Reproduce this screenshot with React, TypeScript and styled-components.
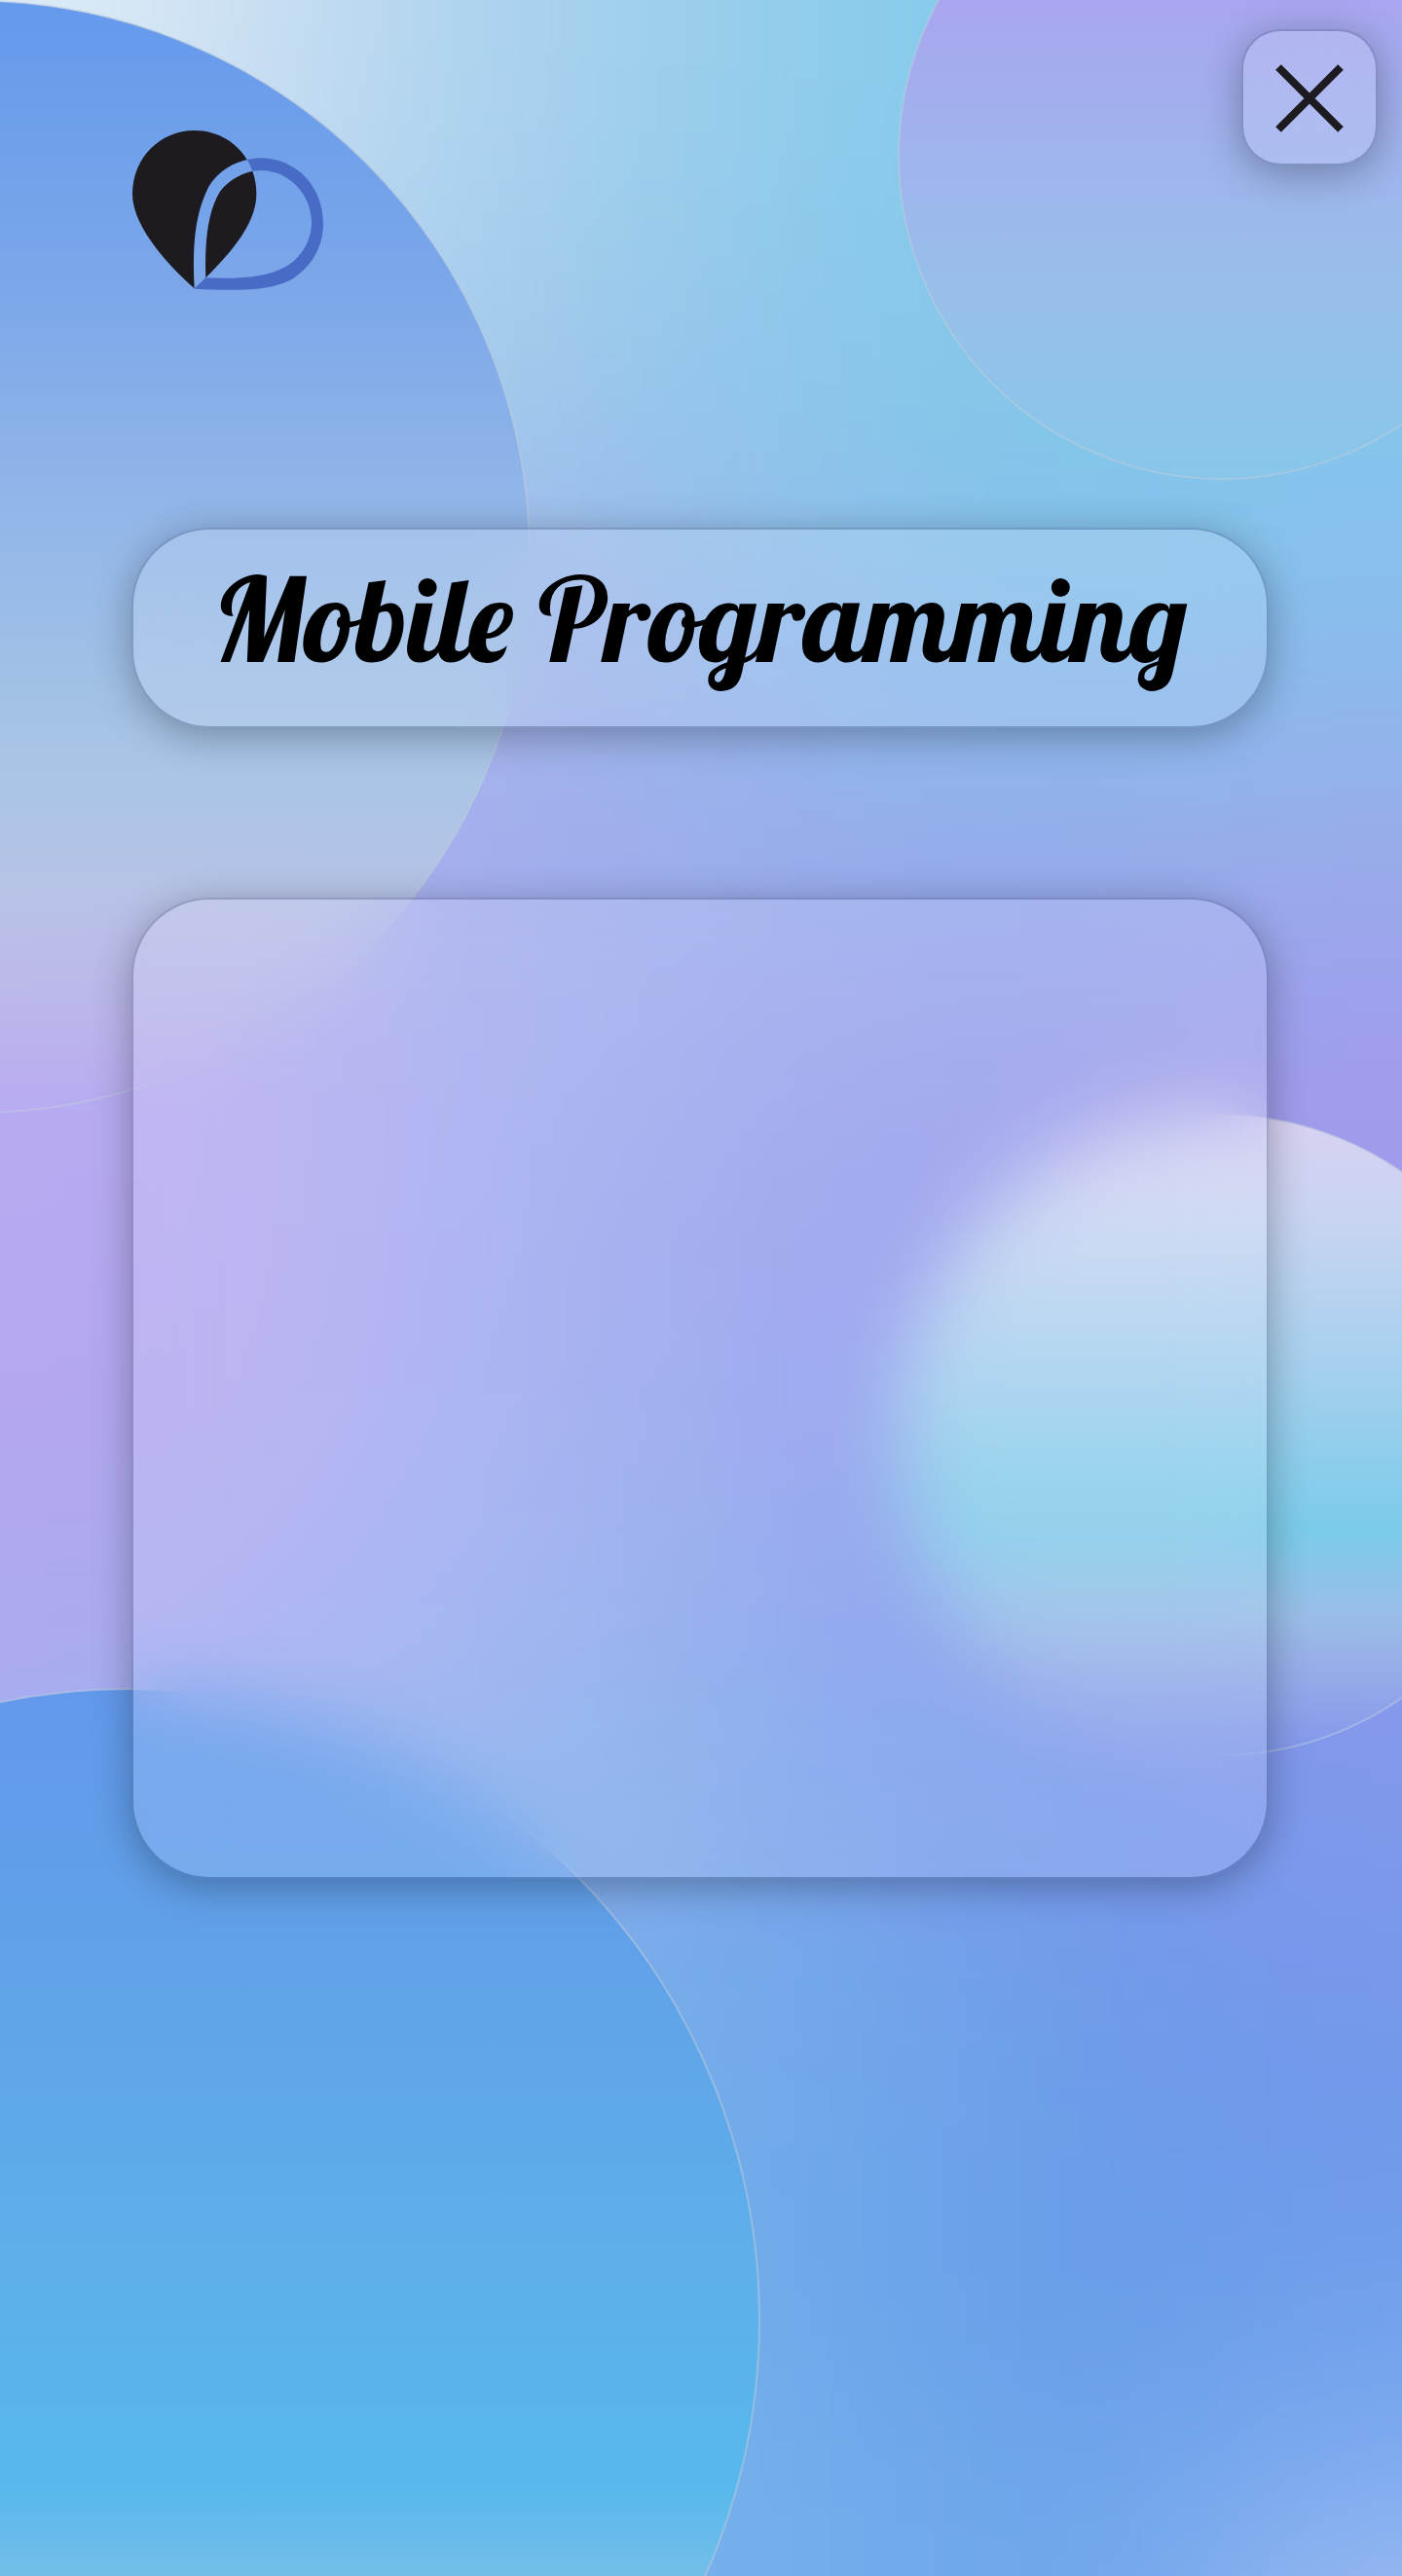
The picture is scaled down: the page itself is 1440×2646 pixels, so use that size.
import React from "react";
import styled, { createGlobalStyle } from "styled-components";

const GlobalStyle = createGlobalStyle`
  *, *::before, *::after { box-sizing: border-box; }
  body { margin: 0; background: #8fb4ec; }
`;

const Page = styled.div`
  position: relative;
  isolation: isolate;
  min-height: 100vh;
  overflow: hidden;
  font-family: "Lobster", "Liberation Serif", serif;
  color: #000;
`;

const Wallpaper = styled.svg`
  position: absolute;
  inset: 0;
  z-index: -1;
  width: 100%;
  height: 100%;
`;

const Header = styled.header`
  display: flex;
  justify-content: space-between;
  align-items: flex-start;
  height: 542px;
  padding: 30px 25px 0 136px;
`;

const LogoLink = styled.a`
  display: block;
  margin-top: 104px;
  line-height: 0;
`;

const Glass = styled.div<{ $blur?: number }>`
  border: 2px solid rgba(40, 50, 80, 0.25);
  background: rgba(255, 255, 255, 0.14);
  background-clip: padding-box;
  backdrop-filter: blur(${({ $blur = 32 }) => $blur}px);
  box-shadow: 0 8px 40px rgba(0, 0, 0, 0.3);
`;

const CloseButton = styled(Glass)`
  display: grid;
  place-items: center;
  width: 140px;
  height: 140px;
  padding: 2px 0 0;
  border-radius: 40px;
  cursor: pointer;
`;

const Main = styled.main`
  display: flex;
  flex-direction: column;
  gap: 174px;
  padding: 0 137px 80px 135px;
`;

const TitleCard = styled(Glass)`
  display: flex;
  align-items: center;
  justify-content: center;
  height: 206px;
  padding-bottom: 20px;
  border-radius: 80px;
`;

const Title = styled.h1`
  margin: 0;
  font-size: 120px;
  font-weight: 400;
  line-height: 150px;
  white-space: nowrap;
`;

const ContentCard = styled(Glass)`
  min-height: 1008px;
  border-radius: 80px;
`;

const CELL_W = 180;
const CELL_H = 189;

const MESH: string[][] = [
  ["#dceaf6", "#c8def2", "#b2d4ee", "#a1d0ed", "#92cceb", "#84cbea", "#84cbea", "#84cbea"],
  ["#cfe0f3", "#bad6ef", "#abd0ee", "#9bcaec", "#8fc8ea", "#82c8e9", "#82c8ea", "#82c8ea"],
  ["#bcd0ee", "#b0cbee", "#a6c6ec", "#98c2ea", "#8ec4ea", "#85c5e9", "#82c6ea", "#86c4ec"],
  ["#b4bcee", "#acb8ee", "#a5b4ec", "#9cb6ea", "#92bbec", "#89bbec", "#87bdec", "#89bcec"],
  ["#b6b0ee", "#adafee", "#a5afec", "#9fafec", "#97aeec", "#93afec", "#94b0eb", "#98adea"],
  ["#b9acf0", "#b1acf0", "#a6aeef", "#9fa9ed", "#9aa5ec", "#979fec", "#9a9feb", "#9f9fec"],
  ["#b8a9f2", "#b3a8f0", "#a2abf0", "#9aa5ed", "#959bed", "#9599ed", "#9c9aec", "#a29aec"],
  ["#b5a6f0", "#b2a8f0", "#a2abf0", "#96a5ed", "#8e9eee", "#8f98ed", "#9598ec", "#9898ec"],
  ["#aea9f0", "#a8abf0", "#9bacf0", "#90a8ee", "#859eec", "#8298ec", "#8698ec", "#8b98ec"],
  ["#a8adf0", "#9cacf0", "#8faeee", "#83aaec", "#7aa1ec", "#7899ec", "#7b97ec", "#8298ec"],
  ["#90b0ee", "#88b0ee", "#82b0ec", "#7cacea", "#76a8ea", "#739fea", "#7299ea", "#7a98ec"],
  ["#80b0ee", "#7cb0ee", "#78b0ec", "#74aeea", "#70a9ea", "#6ca3ea", "#6c9aea", "#6f99ea"],
  ["#80b4ee", "#7cb4ee", "#78b2ec", "#74b0ea", "#6fabea", "#699fe8", "#669bea", "#709fec"],
  ["#84b8ee", "#80b6ee", "#7cb4ec", "#78b2eb", "#74aeeb", "#6fa8ea", "#70a5eb", "#80adee"],
];

const MESH_ROWS = [MESH[0], ...MESH, MESH[MESH.length - 1].map((c, i) => (i === 7 ? "#a4bff2" : c))];

const ORBS = [
  {
    id: "orb-top-left", cx: -27, cy: 572, r: 571,
    stops: [["0", "#6499ec", 1], ["0.25", "#7ba7e9", 1], ["0.5", "#96b9e8", 1], ["0.7", "#aac6e5", 1], ["0.8", "#b7c5e5", 0.9], ["1", "#c8c2e4", 0]],
  },
  {
    id: "orb-top-right", cx: 1255, cy: 160, r: 332,
    stops: [["0", "#ada0f1", 1], ["0.26", "#a8a6f0", 1], ["0.5", "#9fb4ed", 1], ["0.75", "#96c1e9", 1], ["1", "#88c6ea", 1]],
  },
  {
    id: "orb-right", cx: 1252, cy: 1474, r: 329,
    stops: [["0", "#d9d1f2", 1], ["0.15", "#c9d4f1", 1], ["0.4", "#a5d0ee", 1], ["0.65", "#7bcbea", 1], ["0.78", "#9abee7", 1], ["1", "#a8b4e4", 0]],
  },
  {
    id: "orb-bottom-left", cx: 132, cy: 2383, r: 648,
    stops: [["0", "#6399ec", 1], ["0.2", "#60a1e9", 1], ["0.45", "#5eafea", 1], ["0.63", "#57b8ec", 1], ["0.72", "#7abfe8", 1], ["1", "#a0c8e8", 1]],
  },
] as const;

function Backdrop() {
  return (
    <Wallpaper viewBox="0 0 1440 2646" preserveAspectRatio="xMidYMin slice" aria-hidden="true">
      <defs>
        <filter id="mesh-blur" filterUnits="userSpaceOnUse" x="-400" y="-400" width="2240" height="3446" colorInterpolationFilters="sRGB">
          <feGaussianBlur stdDeviation="105" />
        </filter>
        {ORBS.map((orb) => (
          <linearGradient key={orb.id} id={orb.id} x1="0" y1="0" x2="0" y2="1">
            {orb.stops.map(([offset, color, opacity]) => (
              <stop key={offset} offset={offset} stopColor={color} stopOpacity={opacity} />
            ))}
          </linearGradient>
        ))}
      </defs>
      <g filter="url(#mesh-blur)">
        {MESH_ROWS.map((row, y) =>
          [row[0], ...row, row[7]].map((color, x) => (
            <rect
              key={`${x}-${y}`}
              x={(x - 1) * CELL_W - (x === 0 ? 400 : 0)}
              y={(y - 1) * CELL_H - (y === 0 ? 400 : 0)}
              width={CELL_W + (x === 0 || x === 9 ? 400 : 1)}
              height={CELL_H + (y === 0 || y === 15 ? 400 : 1)}
              fill={color}
            />
          )),
        )}
      </g>
      {ORBS.map((orb) => (
        <circle
          key={orb.id}
          cx={orb.cx}
          cy={orb.cy}
          r={orb.r}
          fill={`url(#${orb.id})`}
          stroke="#c0cede"
          strokeOpacity="0.5"
          strokeWidth="2"
        />
      ))}
    </Wallpaper>
  );
}

const DROP = "M239 529C150 450 48 335 48 238C48 125 135 42 239 42C345 42 430 125 430 238C430 330 350 425 239 529Z";
const RING =
  "M239 530C232 400 240 300 283 215C320 155 385 127 445 127C555 130 636 215 636 330C636 400 600 460 545 497C480 537 370 537 239 530Z" +
  "M274 496C270 390 280 290 318 230C350 188 400 165 445 165C530 165 600 240 600 325C600 375 575 425 530 456C470 495 380 500 274 496Z";

function Logo() {
  return (
    <svg width="196" height="164" viewBox="48 42 588 492" aria-hidden="true">
      <defs>
        <mask id="outside-ring" maskUnits="userSpaceOnUse" x="0" y="0" width="700" height="600">
          <rect width="700" height="600" fill="#fff" />
          <path d={RING} fill="#000" fillRule="evenodd" />
        </mask>
        <mask id="outside-drop" maskUnits="userSpaceOnUse" x="0" y="0" width="700" height="600">
          <rect width="700" height="600" fill="#fff" />
          <path d={DROP} fill="#000" />
        </mask>
      </defs>
      <path d={DROP} fill="#1d1b20" mask="url(#outside-ring)" />
      <path d={RING} fill="#486bc6" fillRule="evenodd" mask="url(#outside-drop)" />
    </svg>
  );
}

export default function App() {
  return (
    <Page>
      <GlobalStyle />
      <Backdrop />
      <Header>
        <LogoLink href="#" aria-label="Home">
          <Logo />
        </LogoLink>
        <CloseButton as="button" type="button" aria-label="Close">
          <svg width="70" height="70" viewBox="0 0 70 70" aria-hidden="true">
            <path d="M3 3L67 67M67 3L3 67" stroke="#1d1b20" strokeWidth="8" />
          </svg>
        </CloseButton>
      </Header>
      <Main>
        <TitleCard>
          <Title>Mobile Programming</Title>
        </TitleCard>
        <ContentCard as="section" $blur={40} aria-label="Course content" />
      </Main>
    </Page>
  );
}
